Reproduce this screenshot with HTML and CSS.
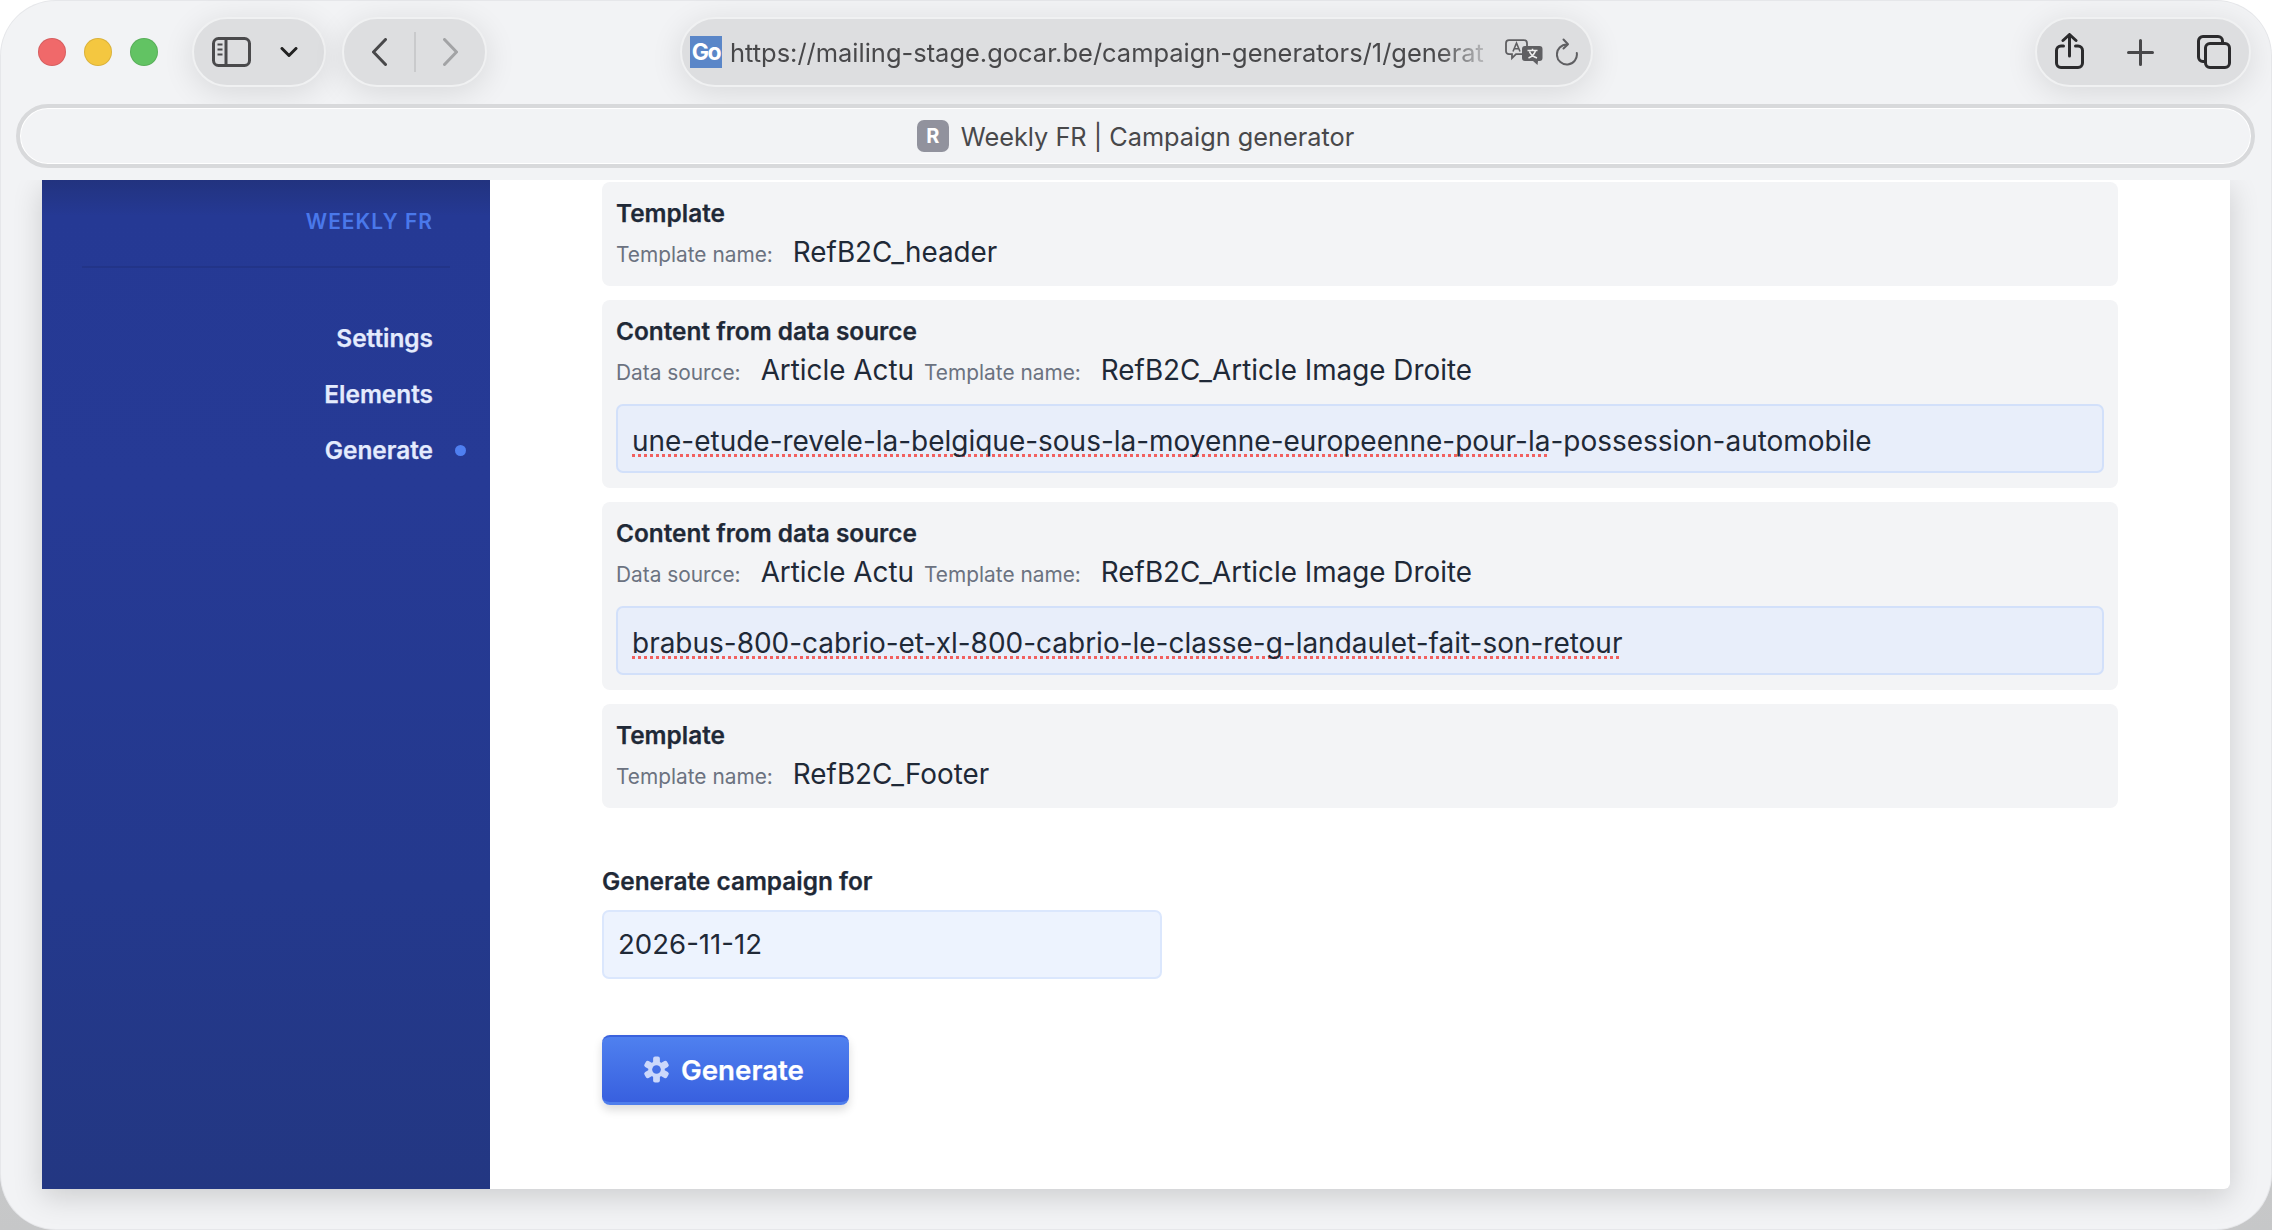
FILE: index.html
```html
<!DOCTYPE html>
<html lang="en">
<head>
<meta charset="utf-8">
<title>Weekly FR | Campaign generator</title>
<link rel="stylesheet" href="styles.css">
</head>
<body>
<div class="window">
  <header class="toolbar">
    <div class="lights">
      <span class="light red"></span><span class="light yellow"></span><span class="light green"></span>
    </div>
    <div class="pill pill-sidebar">
      <svg class="ic-sidebar" viewBox="0 0 39 30" fill="none" stroke="#4a4a4c" stroke-width="3"><rect x="1.5" y="1.5" width="36" height="27" rx="5"/><path d="M14 1.5v27"/><path d="M5.5 7.5h5M5.5 12.5h5M5.5 17.5h5" stroke-width="2"/></svg>
      <svg class="ic-chevdown" viewBox="0 0 18 10" fill="none" stroke="#222" stroke-width="3" stroke-linecap="round" stroke-linejoin="round"><path d="M2 1.5l7 7 7-7"/></svg>
    </div>
    <div class="pill pill-nav">
      <svg class="ic-arrow" viewBox="0 0 15 28" fill="none" stroke="#48484a" stroke-width="3" stroke-linecap="round" stroke-linejoin="round"><path d="M13.5 1.5L1.5 14l12 12.5"/></svg>
      <span class="nav-sep"></span>
      <svg class="ic-arrow" viewBox="0 0 15 28" fill="none" stroke="#a2a3a5" stroke-width="3" stroke-linecap="round" stroke-linejoin="round"><path d="M1.5 1.5L13.5 14 1.5 26.5"/></svg>
    </div>
    <div class="pill pill-url">
      <span class="fav-go">Go</span>
      <span class="url">https://mailing-stage.gocar.be/campaign-generators/1/generat</span>
      <svg class="ic-translate" viewBox="0 0 38 26" fill="none"><path d="M4 1.2h15a3 3 0 0 1 3 3v8a3 3 0 0 1-3 3H11l-4 4v-4H4a3 3 0 0 1-3-3v-8a3 3 0 0 1 3-3z" stroke="#5f5f62" stroke-width="1.8"/><path d="M8 12.5L11.5 4l3.500 8.500M9.300 9.700h4.400" stroke="#5f5f62" stroke-width="1.600"/><path d="M20 7h14.500a3 3 0 0 1 3 3v9a3 3 0 0 1-3 3h-1.500l-.5 4-4.500-4H20a3 3 0 0 1-3-3v-9a3 3 0 0 1 3-3z" fill="#5f5f62"/><path d="M22.500 11.500h10M27.500 9.800v1.700M30.500 11.500c-.8 3.500-3.500 6-7 7.500M24.500 12.500c1 3 3.500 5 7.500 6.500" stroke="#eee" stroke-width="1.500"/></svg>
      <svg class="ic-reload" viewBox="0 0 22 28" fill="none" stroke="#5f5f62" stroke-width="2" stroke-linecap="round" stroke-linejoin="round"><path d="M11 6.500a10 10 0 1 0 9.800 8.500"/><path d="M7.500 1.500L12 6.300 7.500 10.500"/></svg>
    </div>
    <div class="pill pill-actions">
      <svg class="ic-share" viewBox="0 0 29 36" fill="none" stroke="#2b2b2d" stroke-width="3" stroke-linecap="round" stroke-linejoin="round"><path d="M8.500 13H6a4.500 4.500 0 0 0-4.500 4.500V30A4.500 4.500 0 0 0 6 34.500h17a4.500 4.500 0 0 0 4.500-4.500V17.500A4.500 4.500 0 0 0 23 13h-2.500"/><path d="M14.500 23V2M8 7.500l6.500-6 6.500 6"/></svg>
      <svg class="ic-plus" viewBox="0 0 27 27" fill="none" stroke="#48484a" stroke-width="3" stroke-linecap="round"><path d="M13.500 1.500v24M1.500 13.500h24"/></svg>
      <svg class="ic-tabs" viewBox="0 0 34 34" fill="none" stroke="#2b2b2d" stroke-width="3"><path d="M7 26.500H6a4.500 4.500 0 0 1-4.500-4.500V6A4.500 4.500 0 0 1 6 1.500h15A4.500 4.500 0 0 1 25.500 6v2"/><rect x="8.500" y="8.500" width="24" height="24" rx="4.500"/></svg>
    </div>
  </header>

  <div class="tabbar">
    <span class="fav-r">R</span>
    <span class="tab-title">Weekly FR | Campaign generator</span>
  </div>

  <div class="app">
    <aside class="sidebar">
      <div class="brand">WEEKLY FR</div>
      <div class="side-rule"></div>
      <nav class="side-nav">
        <a class="side-link">Settings</a>
        <a class="side-link">Elements</a>
        <a class="side-link active">Generate</a>
      </nav>
    </aside>
    <main class="main">
      <section class="card">
        <h3 class="card-title">Template</h3>
        <div class="meta">
          <span class="meta-label">Template name:</span><span class="meta-value">RefB2C_header</span>
        </div>
      </section>
      <section class="card">
        <h3 class="card-title">Content from data source</h3>
        <div class="meta">
          <span class="meta-label">Data source:</span><span class="meta-value">Article Actu</span>
          <span class="meta-label next">Template name:</span><span class="meta-value">RefB2C_Article Image Droite</span>
        </div>
        <div class="field"><span class="spell">une-etude-revele-la-belgique-sous-la-moyenne-europeenne-pour-la</span>-possession-automobile</div>
      </section>
      <section class="card">
        <h3 class="card-title">Content from data source</h3>
        <div class="meta">
          <span class="meta-label">Data source:</span><span class="meta-value">Article Actu</span>
          <span class="meta-label next">Template name:</span><span class="meta-value">RefB2C_Article Image Droite</span>
        </div>
        <div class="field"><span class="spell">brabus-800-cabrio-et-xl-800-cabrio-le-classe-g-landaulet-fait-son-retour</span></div>
      </section>
      <section class="card">
        <h3 class="card-title">Template</h3>
        <div class="meta">
          <span class="meta-label">Template name:</span><span class="meta-value">RefB2C_Footer</span>
        </div>
      </section>

      <label class="date-label">Generate campaign for</label>
      <div class="date-field">2026-11-12</div>
      <button class="btn" type="button">
        <svg class="ic-gear" viewBox="0 0 28 28"><g fill="#ccd8fb"><rect x="10.500" y="0.500" width="7" height="27" rx="2"/><rect x="10.500" y="0.500" width="7" height="27" rx="2" transform="rotate(60 14 14)"/><rect x="10.500" y="0.500" width="7" height="27" rx="2" transform="rotate(120 14 14)"/></g><circle cx="14" cy="14" r="8.500" fill="#ccd8fb"/><circle cx="14" cy="14" r="4.500" fill="#4570e7"/></svg>
        <span>Generate</span>
      </button>
    </main>
  </div>
</div>
</body>
</html>
```
FILE: styles.css
```css
* { box-sizing: border-box; }
html, body { margin: 0; height: 100%; }
body {
  width: 2272px;
  height: 1230px;
  overflow: hidden;
  background: linear-gradient(180deg, #ffffff 0, #ffffff 50%, #c9cacb 90%, #c6c7c8 100%);
  font-family: Inter, "Noto Sans", sans-serif;
  color: #1f2937;
}

.window {
  width: 2272px;
  height: 1230px;
  border-radius: 56px;
  background: #f2f3f5;
  box-shadow: inset 0 0 0 1px rgba(90, 90, 95, 0.07);
  display: flex;
  flex-direction: column;
  overflow: hidden;
}

/* toolbar */
.toolbar {
  height: 104px;
  flex: none;
  display: flex;
  align-items: flex-start;
  padding: 17px 21px 0 38px;
}
.lights { display: flex; gap: 18px; margin: 21px 34px 0 0; }
.light { width: 28px; height: 28px; border-radius: 50%; border: 1px solid rgba(0, 0, 0, 0.1); }
.red { background: #f0696a; }
.yellow { background: #f4c740; }
.green { background: #62c363; }

.pill {
  height: 70px;
  border-radius: 35px;
  background: #dddee0;
  border: 2px solid #f0f1f2;
  box-shadow: 0 6px 32px rgba(0, 0, 0, 0.11);
  display: flex;
  align-items: center;
}
.pill-sidebar { width: 134px; padding-left: 18px; gap: 29px; margin-right: 16px; }
.pill-nav { width: 145px; padding-left: 28px; margin-right: 193px; }
.pill-url { width: 913px; padding: 0 13px 0 8px; }
.pill-actions { width: 216px; margin-left: auto; padding-left: 18px; gap: 43px; }

.ic-sidebar { width: 39px; height: 30px; }
.ic-chevdown { width: 18px; height: 10px; }
.ic-arrow { width: 15px; height: 28px; }
.nav-sep { width: 2px; height: 40px; background: #c9cacc; margin: 0 27px 0 27px; }
.ic-translate { width: 38px; height: 26px; flex: none; margin-right: 13px; }
.ic-reload { width: 22px; height: 28px; flex: none; }
.ic-share { width: 29px; height: 36px; margin-top: -2px; }
.ic-plus { width: 27px; height: 27px; }
.ic-tabs { width: 34px; height: 34px; }

.fav-go {
  flex: none;
  width: 32px;
  height: 32px;
  background: #5a86c8;
  color: #fff;
  font-size: 23px;
  font-weight: 700;
  line-height: 32px;
  text-align: center;
  letter-spacing: -1.5px;
}
.url {
  flex: 1;
  min-width: 0;
  margin: 1px 15px 0 8px;
  font-size: 25.46px;
  line-height: 36px;
  color: #48484a;
  white-space: nowrap;
  -webkit-mask-image: linear-gradient(90deg, #000 93%, rgba(0, 0, 0, 0.15) 100%);
  mask-image: linear-gradient(90deg, #000 93%, rgba(0, 0, 0, 0.15) 100%);
}

/* tab bar */
.tabbar {
  flex: none;
  height: 64px;
  margin: 0 17px 0 16px;
  border: 4px solid #d8d9db;
  border-radius: 32px;
  background: #f2f3f5;
  box-shadow: inset 0 0 0 1px #ffffff;
  display: flex;
  align-items: center;
  justify-content: center;
  gap: 12px;
}
.fav-r {
  width: 32px;
  height: 32px;
  border-radius: 7px;
  background: #91929d;
  color: #fff;
  font-size: 20px;
  font-weight: 700;
  line-height: 32px;
  text-align: center;
}
.tab-title { font-size: 25.3px; color: #48484a; margin-top: 1px; }

/* app */
.app {
  flex: none;
  height: 1009px;
  margin: 12px 42px 0;
  display: flex;
  background: #fff;
  border-bottom-right-radius: 6px;
  box-shadow: 0 8px 30px rgba(0, 0, 0, 0.16);
  clip-path: inset(0 -60px -60px -60px);
}
.sidebar {
  width: 448px;
  flex: none;
  background: linear-gradient(180deg, #22337f 0, #253994 36px, #263a95 30%, #24398d 70%, #233782 100%);
  padding: 27px 57px 0 42px;
}
.brand {
  font-size: 20.9px;
  font-weight: 600;
  letter-spacing: 1.05px;
  line-height: 30px;
  text-align: right;
  color: #4a78ea;
  margin-bottom: 29px;
}
.side-rule { height: 2px; width: 368px; margin-left: -2px; background: #223488; margin-bottom: 42px; }
.side-nav { display: flex; flex-direction: column; }
.side-link {
  position: relative;
  height: 56px;
  line-height: 56px;
  font-size: 24.4px;
  font-weight: 600;
  text-align: right;
  color: #e4ebfd;
  -webkit-text-stroke: 0.25px #e4ebfd;
}
.side-link.active::after {
  content: "";
  position: absolute;
  right: -33px;
  top: 23px;
  width: 11px;
  height: 11px;
  border-radius: 50%;
  background: #4f7ff0;
}

.main {
  flex: 1;
  min-width: 0;
  padding: 2px 112px 0;
  display: flex;
  flex-direction: column;
  align-items: flex-start;
}
.card {
  align-self: stretch;
  background: #f3f4f6;
  border-radius: 8px;
  padding: 14px;
  margin-bottom: 14px;
}
.card:nth-of-type(2), .card:nth-of-type(3) { padding-bottom: 15px; }
.card-title {
  margin: 0 0 2px;
  font-size: 24.4px;
  font-weight: 600;
  line-height: 34px;
  color: #1f2937;
  -webkit-text-stroke: 0.25px #1f2937;
}
.meta { height: 40px; display: flex; align-items: baseline; line-height: 40px; white-space: nowrap; }
.meta-label { font-size: 20.85px; color: #6b7280; margin-right: 20px; }
.meta-label.next { margin-left: 10px; }
.meta-value { font-size: 27.85px; color: #1f2937; }
.field {
  margin-top: 14px;
  height: 69px;
  line-height: 59px;
  padding: 6px 14px 0;
  font-size: 27.98px;
  color: #1f2937;
  background: #e8eefa;
  border: 2px solid #d2e0fa;
  border-radius: 7px;
  white-space: nowrap;
}
.spell {
  text-decoration: underline dotted #f2605f 3px;
  text-underline-offset: 3px;
  text-decoration-skip-ink: none;
}

.date-label {
  margin-top: 42px;
  font-size: 24.4px;
  font-weight: 600;
  line-height: 34px;
  color: #1f2937;
  -webkit-text-stroke: 0.25px #1f2937;
}
.date-field {
  margin-top: 12px;
  width: 560px;
  height: 69px;
  line-height: 65px;
  padding: 0 14px;
  font-size: 27.6px;
  color: #1f2937;
  background: #edf3fe;
  border: 2px solid #dbe7fd;
  border-radius: 7px;
}
.btn {
  margin-top: 56px;
  width: 247px;
  height: 70px;
  padding: 0 0 0 41px;
  display: flex;
  align-items: center;
  gap: 11px;
  border: 0;
  border-top: 2px solid #3a62dd;
  border-bottom: 3px solid #4f7eec;
  border-radius: 8px;
  background: linear-gradient(180deg, #4f80ef, #3860df);
  box-shadow: 0 5px 10px rgba(0, 0, 0, 0.14);
  color: #fff;
  font-family: Inter, "Noto Sans", sans-serif;
  font-size: 27.7px;
  font-weight: 600;
  -webkit-text-stroke: 0.25px #fff;
}
.ic-gear { width: 27px; height: 27px; flex: none; }
```
